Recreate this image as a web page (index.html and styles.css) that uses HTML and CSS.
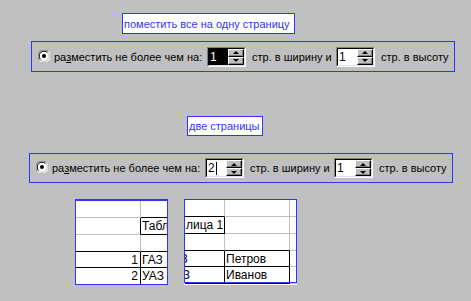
FILE: index.html
```html
<!DOCTYPE html>
<html lang="ru">

<head>
    <meta charset="UTF-8">
    <title>Разметка страницы</title>
    <link rel="stylesheet" href="styles.css">
</head>

<body>

    <div class="caption caption-one">поместить все на одну страницу</div>
    <div class="panel panel-one">
        <svg class="radio" width="12" height="12" viewBox="0 0 12 12">
            <circle cx="6" cy="6" r="5" fill="#fff"/>
            <path d="M1.5 10.5 A6 6 0 0 1 10.5 1.5" fill="none" stroke="#808080" stroke-width="1"/>
            <path d="M2.6 9.4 A4.8 4.8 0 0 1 9.4 2.6" fill="none" stroke="#000" stroke-width="1"/>
            <path d="M10.5 1.5 A6 6 0 0 1 1.5 10.5" fill="none" stroke="#fff" stroke-width="1"/>
            <path d="M9.4 2.6 A4.8 4.8 0 0 1 2.6 9.4" fill="none" stroke="#dfdfdf" stroke-width="1"/>
            <circle cx="6" cy="6" r="2" fill="#000"/>
        </svg>
        <span class="lbl lbl-first">ра<u>з</u>местить не более чем на:</span>
        <div class="spin">
            <div class="spin-in">
                <div class="field"><span class="sel">1</span></div>
                <div class="btns">
                    <div class="arrow-btn"><i class="up"></i></div>
                    <div class="arrow-btn"><i class="dn"></i></div>
                </div>
            </div>
        </div>
        <span class="lbl lbl-mid">стр. в ширину и</span>
        <div class="spin">
            <div class="spin-in">
                <div class="field">1</div>
                <div class="btns">
                    <div class="arrow-btn"><i class="up"></i></div>
                    <div class="arrow-btn"><i class="dn"></i></div>
                </div>
            </div>
        </div>
        <span class="lbl lbl-last">стр. в высоту</span>
    </div>

    <div class="caption caption-two">две страницы</div>
    <div class="panel panel-two">
        <svg class="radio" width="12" height="12" viewBox="0 0 12 12">
            <circle cx="6" cy="6" r="5" fill="#fff"/>
            <path d="M1.5 10.5 A6 6 0 0 1 10.5 1.5" fill="none" stroke="#808080" stroke-width="1"/>
            <path d="M2.6 9.4 A4.8 4.8 0 0 1 9.4 2.6" fill="none" stroke="#000" stroke-width="1"/>
            <path d="M10.5 1.5 A6 6 0 0 1 1.5 10.5" fill="none" stroke="#fff" stroke-width="1"/>
            <path d="M9.4 2.6 A4.8 4.8 0 0 1 2.6 9.4" fill="none" stroke="#dfdfdf" stroke-width="1"/>
            <circle cx="6" cy="6" r="2" fill="#000"/>
        </svg>
        <span class="lbl lbl-first">ра<u>з</u>местить не более чем на:</span>
        <div class="spin">
            <div class="spin-in">
                <div class="field">2<span class="caret"></span></div>
                <div class="btns">
                    <div class="arrow-btn"><i class="up"></i></div>
                    <div class="arrow-btn"><i class="dn"></i></div>
                </div>
            </div>
        </div>
        <span class="lbl lbl-mid">стр. в ширину и</span>
        <div class="spin">
            <div class="spin-in">
                <div class="field">1</div>
                <div class="btns">
                    <div class="arrow-btn"><i class="up"></i></div>
                    <div class="arrow-btn"><i class="dn"></i></div>
                </div>
            </div>
        </div>
        <span class="lbl lbl-last">стр. в высоту</span>
    </div>

    <div class="sheets">
        <div class="page page-left">
            <div class="grid grid-left">
                <div class="c"></div><div class="c bb"></div>
                <div class="c br"></div><div class="c bb txt">Таблица 1</div>
                <div class="c bb"></div><div class="c bb"></div>
                <div class="c br bb num">1</div><div class="c bb txt">ГАЗ</div>
                <div class="c br bb num">2</div><div class="c bb txt">УАЗ</div>
            </div>
        </div>
        <div class="page page-right">
            <div class="grid grid-right">
                <div class="c bb"></div><div class="c"></div><div class="c"></div>
                <div class="c br bb txt">лица 1</div><div class="c"></div><div class="c"></div>
                <div class="c bb"></div><div class="c bb"></div><div class="c"></div>
                <div class="c br bb txt tail-a">ГАЗ</div><div class="c br bb txt">Петров</div><div class="c"></div>
                <div class="c br bb txt tail-b">УАЗ</div><div class="c br bb txt">Иванов</div><div class="c"></div>
            </div>
        </div>
    </div>

</body>

</html>
```

FILE: styles.css
```css
body {
    margin: 0;
    background-color: #c0c0c0;
    font-family: "Liberation Sans", Arial, sans-serif;
    font-size: 11px;
    color: #000;
}

/* blue captions above each panel */
.caption {
    box-sizing: border-box;
    display: flex;
    align-items: center;
    height: 21px;
    padding-left: 1px;
    background-color: #fff;
    border: 1px solid #3333ff;
    color: #3333ff;
    white-space: nowrap;
}

.caption-one {
    width: 173px;
    margin: 13px 0 0 122px;
}

.caption-two {
    width: 76px;
    height: 20px;
    margin: 44px 0 0 187px;
}

.panel {
    box-sizing: border-box;
    display: flex;
    align-items: center;
    width: 424px;
    height: 31px;
    padding-left: 6px;
    border: 1px solid #3333ff;
    white-space: nowrap;
}

.panel-one {
    margin: 7px 0 0 31px;
}

.panel-two {
    height: 30px;
    margin: 17px 0 0 29px;
}

.radio {
    flex: none;
    margin-top: -2px;
}

.lbl-first {
    width: 153px;
    margin-left: 4px;
}

.lbl-mid {
    width: 90px;
    padding-left: 6px;
    box-sizing: border-box;
}

.lbl-last {
    margin-left: 6px;
}

/* spin box */
.spin {
    box-sizing: border-box;
    display: flex;
    width: 39px;
    height: 20px;
    border-top: 1px solid #808080;
    border-left: 1px solid #808080;
    border-right: 1px solid #fff;
    border-bottom: 1px solid #fff;
}

.spin-in {
    flex: 1;
    display: flex;
    background-color: #fff;
    border-top: 1px solid #000;
    border-left: 1px solid #000;
    border-right: 1px solid #dfdfdf;
    border-bottom: 1px solid #dfdfdf;
}

.field {
    flex: 1;
    display: flex;
    align-items: center;
    padding-left: 1px;
    font-size: 12px;
}

.sel {
    background-color: #000;
    color: #fff;
    align-self: stretch;
    display: flex;
    align-items: center;
    width: 18px;
    margin-left: -1px;
    padding-left: 1px;
}

.caret {
    width: 1px;
    height: 13px;
    margin-left: 1px;
    background-color: #000;
}

.btns {
    display: flex;
    flex-direction: column;
    width: 16px;
}

.arrow-btn {
    flex: 1;
    display: flex;
    justify-content: center;
    align-items: center;
    background-color: #c0c0c0;
    border-top: 1px solid #fff;
    border-left: 1px solid #fff;
    border-right: 1px solid #000;
    border-bottom: 1px solid #000;
    box-shadow: inset -1px -1px #808080;
}

.up {
    border-left: 3px solid transparent;
    border-right: 3px solid transparent;
    border-bottom: 3px solid #000;
}

.dn {
    border-left: 3px solid transparent;
    border-right: 3px solid transparent;
    border-top: 3px solid #000;
}

/* two printed pages */
.sheets {
    display: flex;
    margin: 16px 0 0 75px;
    font-size: 12px;
}

.page {
    position: relative;
    overflow: hidden;
    height: 86px;
    background-color: #fff;
}

.page::after {
    content: "";
    position: absolute;
    inset: 0;
    border: 1px solid #3333ff;
}

.page-left {
    width: 93px;
}

.page-left::after {
    border-top-width: 2px;
}

.page-right {
    width: 113px;
    margin-left: 16px;
}

.page-right::after {
    bottom: 2px;
}

.grid {
    display: grid;
    grid-template-rows: 18px 17px 17px 16px 17px;
}

.grid-left {
    grid-template-columns: 65px 65px;
    padding: 1px 0 0 1px;
}

.grid-right {
    grid-template-columns: 40px 65px 30px;
    padding: 0 0 0 1px;
}

.c {
    box-sizing: border-box;
    border-right: 1px solid #c0c0c0;
    border-bottom: 1px solid #c0c0c0;
    white-space: nowrap;
    line-height: 16px;
}

.br {
    border-right-color: #000;
}

.bb {
    border-bottom-color: #000;
}

.txt {
    padding-left: 1px;
}

.num {
    text-align: right;
    padding-right: 2px;
}

.tail-a,
.tail-b {
    overflow: hidden;
}

.tail-a {
    text-indent: -19px;
}

.tail-b {
    text-indent: -18px;
}
```
